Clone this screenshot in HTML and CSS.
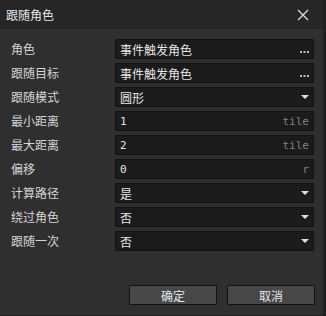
FILE: index.html
```html
<!DOCTYPE html>
<html lang="zh-CN">

<head>
    <meta charset="UTF-8">
    <title>跟随角色</title>
    <link rel="stylesheet" href="styles.css">
</head>

<body>
    <div class="dialog">
        <div class="titlebar">
            <span class="title">跟随角色</span>
            <svg class="close" width="12" height="12" viewBox="0 0 12 12">
                <path d="M1 1 L11 11 M11 1 L1 11" stroke="#dcdcdc" stroke-width="1.3" fill="none"/>
            </svg>
        </div>

        <div class="form">
            <label>角色</label>
            <div class="field"><span class="value">事件触发角色</span><svg class="dots" width="9" height="2"><rect x="0" y="0" width="2" height="2"/><rect x="3.5" y="0" width="2" height="2"/><rect x="7" y="0" width="2" height="2"/></svg></div>

            <label>跟随目标</label>
            <div class="field"><span class="value">事件触发角色</span><svg class="dots" width="9" height="2"><rect x="0" y="0" width="2" height="2"/><rect x="3.5" y="0" width="2" height="2"/><rect x="7" y="0" width="2" height="2"/></svg></div>

            <label>跟随模式</label>
            <div class="field"><span class="value">圆形</span><span class="arrow"></span></div>

            <label>最小距离</label>
            <div class="field"><span class="value num">1</span><span class="unit">tile</span></div>

            <label>最大距离</label>
            <div class="field"><span class="value num">2</span><span class="unit">tile</span></div>

            <label>偏移</label>
            <div class="field"><span class="value num">0</span><span class="unit">r</span></div>

            <label>计算路径</label>
            <div class="field"><span class="value">是</span><span class="arrow"></span></div>

            <label>绕过角色</label>
            <div class="field"><span class="value">否</span><span class="arrow"></span></div>

            <label>跟随一次</label>
            <div class="field"><span class="value">否</span><span class="arrow"></span></div>
        </div>

        <div class="buttons">
            <button>确定</button>
            <button>取消</button>
        </div>
    </div>
</body>

</html>
```

FILE: styles.css
```css
body {
    margin: 0;
    padding: 0;
    background-color: #1f1f1f;
    font-family: "Noto Sans CJK SC", "Noto Sans", sans-serif;
    font-size: 12px;
}

.dialog {
    width: 323px;
    height: 315px;
    background-color: #2f2f2f;
    display: flex;
    flex-direction: column;
}

.titlebar {
    height: 29px;
    background-color: #262626;
    display: flex;
    align-items: center;
    justify-content: space-between;
    padding: 0 14px 0 6px;
}

.title {
    color: #e4e8ee;
    font-size: 12px;
}

.form {
    display: grid;
    grid-template-columns: 104px 199px;
    grid-auto-rows: 20px;
    row-gap: 4px;
    padding: 10px 0 0 11px;
}

label {
    color: #d6d6d6;
    line-height: 20px;
}

.field {
    background-color: #1b1b1c;
    border: 1px solid #121212;
    border-radius: 1px;
    display: flex;
    align-items: center;
    justify-content: space-between;
    padding: 0 4px 0 4px;
    box-sizing: border-box;
    color: #e6e6e6;
}

.value.num {
    font-family: "DejaVu Sans Mono", monospace;
    font-size: 11px;
}

.unit {
    font-family: "DejaVu Sans Mono", monospace;
    font-size: 11px;
    color: #808080;
}

.dots {
    fill: #c0c0c0;
    align-self: flex-end;
    margin-bottom: 5px;
}

.arrow {
    width: 0;
    height: 0;
    border-left: 4px solid transparent;
    border-right: 4px solid transparent;
    border-top: 4px solid #e0e0e0;
}

.buttons {
    margin-top: auto;
    display: flex;
    justify-content: flex-end;
    gap: 10px;
    padding: 0 8px 10px 0;
}

button {
    width: 88px;
    height: 20px;
    background-color: #474747;
    border: 1px solid #121212;
    border-radius: 1px;
    color: #e4e8ee;
    font-family: "Noto Sans CJK SC", sans-serif;
    font-size: 12px;
    padding: 0;
}
```
